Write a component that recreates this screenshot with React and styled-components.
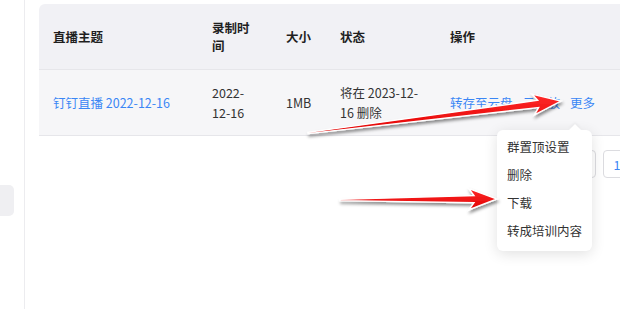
import styled, { createGlobalStyle } from "styled-components";

const GlobalStyle = createGlobalStyle`
  html, body {
    margin: 0;
    padding: 0;
    background: #fff;
    overflow: hidden;
  }
  body {
    font-family: "Noto Sans CJK SC", "Noto Sans", sans-serif;
    color: #262626;
  }
`;

const Page = styled.div`
  position: relative;
  display: flex;
  width: 620px;
  height: 309px;
  overflow: hidden;
`;

const Sidebar = styled.aside`
  flex: 0 0 25px;
  border-right: 1px solid #ececef;
  padding-top: 185px;
  box-sizing: border-box;
`;

const SideItem = styled.div`
  width: 14px;
  height: 31px;
  border-radius: 0 5px 5px 0;
  background: #efeff2;
`;

const Main = styled.main`
  flex: 1;
  padding: 4px 0 0 14px;
  min-width: 0;
`;

const Table = styled.table`
  width: 640px;
  border-collapse: separate;
  border-spacing: 0;
  table-layout: fixed;
  font-size: 12.5px;
`;

const Th = styled.th`
  box-sizing: border-box;
  width: ${(p) => p.$w}px;
  background: #f1f1f5;
  height: 66px;
  padding: 0 14px;
  text-align: left;
  font-weight: 600;
  line-height: 18px;
  color: #1f1f1f;
  border-bottom: 1px solid #e6e6ea;
  &:first-child {
    border-top-left-radius: 6px;
  }
`;

const Td = styled.td`
  background: #f6f6f8;
  height: 65px;
  padding: 0 14px;
  line-height: 20px;
  color: #333;
  vertical-align: middle;
  border-bottom: 1px solid #e6e6ea;
`;

const Link = styled.a`
  color: #3a86f5;
  text-decoration: none;
  white-space: nowrap;
`;

const Actions = styled.div`
  display: flex;
  gap: 10px;
  white-space: nowrap;
`;

const Pager = styled.div`
  display: flex;
  gap: 7px;
  margin: 14px 0 0 529px;
`;

const PageBtn = styled.div`
  flex: 0 0 28px;
  height: 28px;
  box-sizing: border-box;
  border: 1px solid #dcdce0;
  border-radius: 4px;
  display: flex;
  align-items: center;
  justify-content: center;
  font-size: 12.5px;
  color: ${(p) => (p.$active ? "#3a86f5" : "#999")};
`;

const Menu = styled.ul`
  position: absolute;
  left: 497px;
  top: 130px;
  width: 95px;
  margin: 0;
  padding: 3px 0 6px;
  list-style: none;
  background: #fff;
  border-radius: 6px;
  box-shadow: 0 3px 14px rgba(0, 0, 0, 0.12);
  font-size: 12.5px;
  color: #333;
  &::before {
    content: "";
    position: absolute;
    top: -6px;
    left: 72px;
    border: 6px solid transparent;
    border-top: 0;
    border-bottom-color: #fff;
    filter: drop-shadow(0 -2px 1px rgba(0, 0, 0, 0.04));
  }
`;

const MenuItem = styled.li`
  height: 28px;
  line-height: 28px;
  padding-left: 10px;
  white-space: nowrap;
`;

const Overlay = styled.svg`
  position: absolute;
  left: 0;
  top: 0;
  pointer-events: none;
`;

function arrowPoints(tx, ty, px, py) {
  const dx = px - tx;
  const dy = py - ty;
  const len = Math.hypot(dx, dy);
  const ux = dx / len;
  const uy = dy / len;
  const nx = -uy;
  const ny = ux;
  const headLen = 28;
  const headW = 10.5;
  const back = 5;
  const sTail = 0.6;
  const sHead = 3.6;
  const bx = px - ux * headLen;
  const by = py - uy * headLen;
  const pt = (x, y) => `${x.toFixed(1)},${y.toFixed(1)}`;
  return [
    pt(tx + nx * sTail, ty + ny * sTail),
    pt(bx + ux * back + nx * sHead, by + uy * back + ny * sHead),
    pt(bx + nx * headW, by + ny * headW),
    pt(px, py),
    pt(bx - nx * headW, by - ny * headW),
    pt(bx + ux * back - nx * sHead, by + uy * back - ny * sHead),
    pt(tx - nx * sTail, ty - ny * sTail),
  ].join(" ");
}

const arrows = [
  { tail: [308, 133], tip: [561, 101] },
  { tail: [340, 200], tip: [497, 199] },
];

const RedArrows = () => (
  <Overlay width="620" height="309" viewBox="0 0 620 309">
    <defs>
      <filter id="sh" x="-10%" y="-50%" width="120%" height="200%">
        <feDropShadow dx="1" dy="2.5" stdDeviation="1.6" floodColor="#000" floodOpacity="0.45" />
      </filter>
      <linearGradient id="rg" x1="0" y1="0" x2="0" y2="1">
        <stop offset="0" stopColor="#ff2a2a" />
        <stop offset="1" stopColor="#e00000" />
      </linearGradient>
    </defs>
    {arrows.map((a, i) => (
      <polygon
        key={i}
        points={arrowPoints(a.tail[0], a.tail[1], a.tip[0], a.tip[1])}
        fill="url(#rg)"
        stroke="#fff"
        strokeWidth="1.4"
        strokeLinejoin="miter"
        filter="url(#sh)"
      />
    ))}
  </Overlay>
);

const columns = [
  { title: "直播主题", w: 159 },
  { title: "录制时间", w: 74 },
  { title: "大小", w: 54 },
  { title: "状态", w: 110 },
  { title: "操作", w: 243 },
];

const menuItems = ["群置顶设置", "删除", "下载", "转成培训内容"];

export default function App() {
  return (
    <>
      <GlobalStyle />
      <Page>
        <Sidebar>
          <SideItem />
        </Sidebar>
        <Main>
          <Table>
            <thead>
              <tr>
                {columns.map((c) => (
                  <Th key={c.title} $w={c.w}>
                    {c.title}
                  </Th>
                ))}
              </tr>
            </thead>
            <tbody>
              <tr>
                <Td>
                  <Link>钉钉直播 2022-12-16</Link>
                </Td>
                <Td>2022-12-16</Td>
                <Td>1MB</Td>
                <Td>将在 2023-12-16 删除</Td>
                <Td>
                  <Actions>
                    <Link>转存至云盘</Link>
                    <Link>云回放</Link>
                    <Link>更多</Link>
                  </Actions>
                </Td>
              </tr>
            </tbody>
          </Table>
          <Pager>
            <PageBtn>‹</PageBtn>
            <PageBtn $active>1</PageBtn>
            <PageBtn>›</PageBtn>
          </Pager>
        </Main>
        <Menu>
          {menuItems.map((m) => (
            <MenuItem key={m}>{m}</MenuItem>
          ))}
        </Menu>
        <RedArrows />
      </Page>
    </>
  );
}
